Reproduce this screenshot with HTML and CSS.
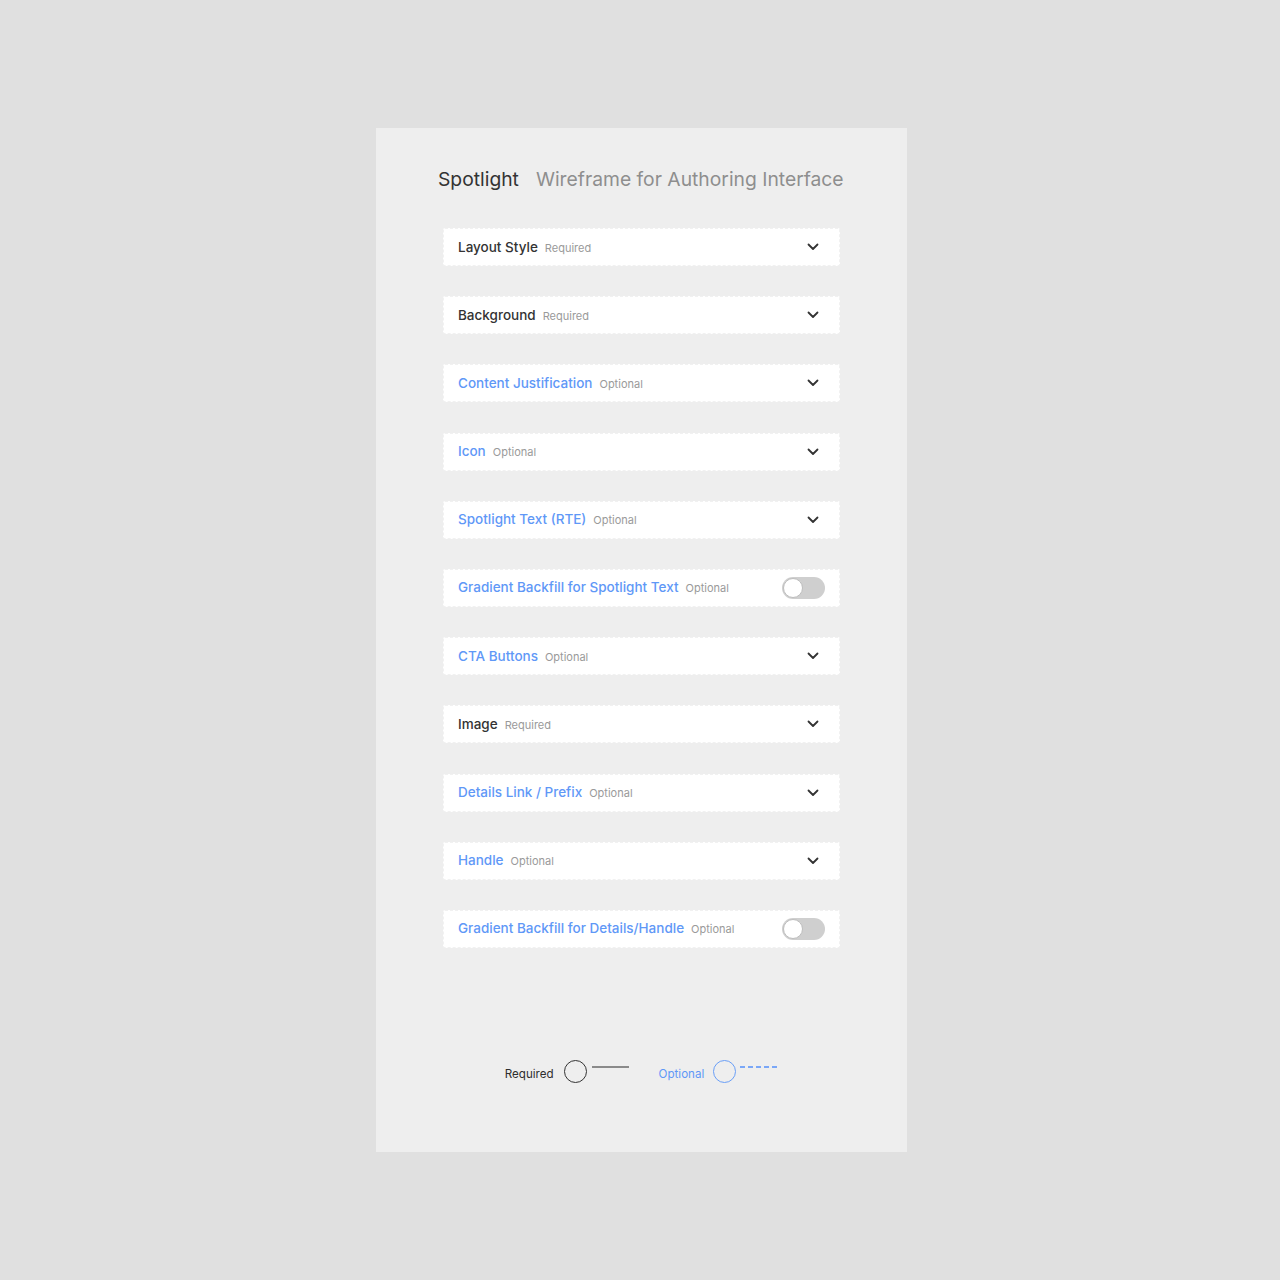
FILE: index.html
```html
<!DOCTYPE html>
<html>
<head>
<meta charset="utf-8">
<link rel="stylesheet" href="styles.css">
</head>
<body>
<div class="panel">
  <div class="title">
    <span class="title-main">Spotlight</span>
    <span class="title-sub">Wireframe for Authoring Interface</span>
  </div>
  <div class="rows">
    <div class="row"><div class="label"><span class="name req">Layout Style</span><span class="hint">Required</span></div><svg class="chev" width="12" height="8" viewBox="0 0 12 8"><path d="M1.5 1.5 L6 6 L10.5 1.5" fill="none" stroke="#333" stroke-width="1.8" stroke-linecap="round" stroke-linejoin="round"/></svg></div>
    <div class="row"><div class="label"><span class="name req">Background</span><span class="hint">Required</span></div><svg class="chev" width="12" height="8" viewBox="0 0 12 8"><path d="M1.5 1.5 L6 6 L10.5 1.5" fill="none" stroke="#333" stroke-width="1.8" stroke-linecap="round" stroke-linejoin="round"/></svg></div>
    <div class="row"><div class="label"><span class="name opt">Content Justification</span><span class="hint">Optional</span></div><svg class="chev" width="12" height="8" viewBox="0 0 12 8"><path d="M1.5 1.5 L6 6 L10.5 1.5" fill="none" stroke="#333" stroke-width="1.8" stroke-linecap="round" stroke-linejoin="round"/></svg></div>
    <div class="row"><div class="label"><span class="name opt">Icon</span><span class="hint">Optional</span></div><svg class="chev" width="12" height="8" viewBox="0 0 12 8"><path d="M1.5 1.5 L6 6 L10.5 1.5" fill="none" stroke="#333" stroke-width="1.8" stroke-linecap="round" stroke-linejoin="round"/></svg></div>
    <div class="row"><div class="label"><span class="name opt">Spotlight Text (RTE)</span><span class="hint">Optional</span></div><svg class="chev" width="12" height="8" viewBox="0 0 12 8"><path d="M1.5 1.5 L6 6 L10.5 1.5" fill="none" stroke="#333" stroke-width="1.8" stroke-linecap="round" stroke-linejoin="round"/></svg></div>
    <div class="row"><div class="label"><span class="name opt">Gradient Backfill for Spotlight Text</span><span class="hint">Optional</span></div><div class="toggle"><div class="knob"></div></div></div>
    <div class="row"><div class="label"><span class="name opt">CTA Buttons</span><span class="hint">Optional</span></div><svg class="chev" width="12" height="8" viewBox="0 0 12 8"><path d="M1.5 1.5 L6 6 L10.5 1.5" fill="none" stroke="#333" stroke-width="1.8" stroke-linecap="round" stroke-linejoin="round"/></svg></div>
    <div class="row"><div class="label"><span class="name req">Image</span><span class="hint">Required</span></div><svg class="chev" width="12" height="8" viewBox="0 0 12 8"><path d="M1.5 1.5 L6 6 L10.5 1.5" fill="none" stroke="#333" stroke-width="1.8" stroke-linecap="round" stroke-linejoin="round"/></svg></div>
    <div class="row"><div class="label"><span class="name opt">Details Link / Prefix</span><span class="hint">Optional</span></div><svg class="chev" width="12" height="8" viewBox="0 0 12 8"><path d="M1.5 1.5 L6 6 L10.5 1.5" fill="none" stroke="#333" stroke-width="1.8" stroke-linecap="round" stroke-linejoin="round"/></svg></div>
    <div class="row"><div class="label"><span class="name opt">Handle</span><span class="hint">Optional</span></div><svg class="chev" width="12" height="8" viewBox="0 0 12 8"><path d="M1.5 1.5 L6 6 L10.5 1.5" fill="none" stroke="#333" stroke-width="1.8" stroke-linecap="round" stroke-linejoin="round"/></svg></div>
    <div class="row"><div class="label"><span class="name opt">Gradient Backfill for Details/Handle</span><span class="hint">Optional</span></div><div class="toggle"><div class="knob"></div></div></div>
  </div>
  <div class="legend">
    <div class="legend-item">
      <span class="legend-text req">Required</span>
      <span class="circle circle-req"></span>
      <span class="line line-req"></span>
    </div>
    <div class="legend-item">
      <span class="legend-text opt">Optional</span>
      <span class="circle circle-opt"></span>
      <span class="line line-opt"></span>
    </div>
  </div>
</div>
</body>
</html>
```

FILE: styles.css
```css
* { box-sizing: border-box; }
html, body { margin: 0; padding: 0; }
body {
  background: #e0e0e0;
  font-family: Inter, "Noto Sans", sans-serif;
  width: 1280px;
  height: 1280px;
}
.panel {
  margin: 128px 0 0 376px;
  width: 531px;
  height: 1024px;
  background: #eeeeee;
  padding: 39px 0 0 0;
  display: flex;
  flex-direction: column;
}
.title {
  margin-left: 62px;
  display: flex;
  gap: 17px;
  font-size: 19.3px;
  line-height: 24px;
  white-space: nowrap;
}
.title-main { color: #333333; }
.title-sub { color: #8e8e8e; }
.rows {
  margin: 37px 0 0 67px;
  width: 397px;
  display: flex;
  flex-direction: column;
  gap: 30.2px;
}
.row {
  height: 38px;
  background: #ffffff;
  border: 1px dashed #f1f1f1;
  border-radius: 2px;
  display: flex;
  align-items: center;
  justify-content: space-between;
  padding: 0 20px 0 14px;
}
.label {
  display: flex;
  align-items: baseline;
  gap: 7px;
  margin-top: -1px;
}
.name {
  font-size: 13.5px;
  font-weight: 500;
}
.name.req { color: #333333; }
.name.opt { color: #5f98f7; }
.hint {
  font-size: 11px;
  color: #9a9a9a;
}
.row:has(.toggle) { padding-right: 14px; }
.toggle {
  width: 43px;
  height: 22px;
  border-radius: 11px;
  background: #cfcfcf;
  position: relative;
}
.knob {
  position: absolute;
  left: 1px;
  top: 1px;
  width: 20px;
  height: 20px;
  border-radius: 50%;
  background: #ffffff;
  border: 1px solid #bdbdbd;
}
.legend {
  margin-top: 112px;
  display: flex;
  justify-content: center;
  gap: 30px;
}
.legend-item {
  display: flex;
  align-items: center;
}
.legend-text {
  font-size: 11.6px;
  padding-top: 5px;
}
.legend-text.req { color: #2e2e2e; margin-right: 10px; }
.legend-text.opt { color: #5f98f7; margin-right: 9px; }
.circle {
  width: 23px;
  height: 23px;
  border-radius: 50%;
  display: block;
}
.circle-req { border: 1.5px solid #333333; }
.circle-opt { border: 1.5px solid #6a9ff7; }
.line {
  display: block;
  width: 37px;
  height: 2px;
  margin-left: 5px;
  margin-bottom: 8px;
}
.line-req { background: #8a8a8a; }
.line-opt {
  width: 38px;
  margin-left: 4px;
  height: 2px;
  background: repeating-linear-gradient(to right, #7aa7f7 0 5px, transparent 5px 8px);
}
```
